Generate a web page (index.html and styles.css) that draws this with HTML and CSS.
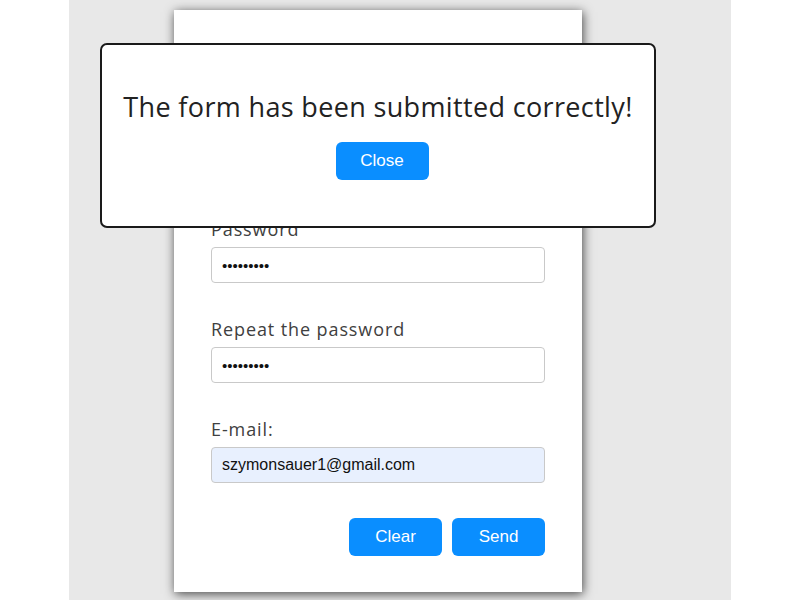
FILE: index.html
```html
<!DOCTYPE html>
<html lang="en">
<head>
<meta charset="utf-8">
<title>Form</title>
<link rel="stylesheet" href="styles.css">
</head>
<body>
<div class="page">
  <form class="card">
    <div class="field">
      <label class="label">Password</label>
      <input class="input input-pass" type="password" value="123456789">
    </div>
    <div class="field">
      <label class="label">Repeat the password</label>
      <input class="input input-pass" type="password" value="123456789">
    </div>
    <div class="field">
      <label class="label">E-mail:</label>
      <input class="input input-filled" type="text" value="szymonsauer1@gmail.com">
    </div>
    <div class="actions">
      <button type="button" class="btn">Clear</button>
      <button type="button" class="btn">Send</button>
    </div>
  </form>
</div>
<div class="modal">
  <p class="modal-text">The form has been submitted correctly!</p>
  <button type="button" class="btn btn-close">Close</button>
</div>
</body>
</html>
```

FILE: styles.css
```css
* { box-sizing: border-box; }
html, body { margin: 0; padding: 0; background: #fff; }
body {
  font-family: "Open Sans", "DejaVu Sans", sans-serif;
  height: 600px;
  overflow: hidden;
}
.page {
  width: 662px;
  height: 600px;
  margin: 0 auto;
  background: #e8e8e8;
  padding-top: 10px;
}
.card {
  width: 408px;
  margin-left: 105px;
  background: #fff;
  box-shadow: 1px 2px 10px rgba(0,0,0,0.7);
  padding: 208px 37px 36px;
}
.field {
  display: flex;
  flex-direction: column;
  margin-bottom: 35px;
}
.label {
  font-size: 18px;
  line-height: 22px;
  color: #404040;
  margin-bottom: 7px;
  letter-spacing: 0.9px;
}
.input {
  height: 36px;
  border: 1px solid #c9c9c9;
  border-radius: 4px;
  padding: 0 10px;
  font-family: "Liberation Sans", Arial, sans-serif;
  font-size: 16px;
  color: #111;
  background: #fff;
  outline: none;
}
.input-pass { font-size: 15px; }
.input-filled { background: #e8f0fe; }
.actions {
  display: flex;
  justify-content: flex-end;
  gap: 10px;
}
.btn {
  width: 93px;
  height: 38px;
  border: none;
  border-radius: 6px;
  background: #0a8eff;
  color: #fff;
  font-family: "Liberation Sans", Arial, sans-serif;
  font-size: 17px;
  cursor: pointer;
}
.modal {
  position: absolute;
  left: 100px;
  top: 43px;
  width: 556px;
  height: 185px;
  background: #fff;
  border: 2px solid #1a1a1a;
  border-radius: 7px;
  display: flex;
  flex-direction: column;
  align-items: center;
}
.modal-text {
  margin: 45px 0 0;
  font-size: 27px;
  line-height: 34px;
  color: #222;
  letter-spacing: 0.35px;
}
.btn-close {
  margin: 18px 0 0 8px;
}
```
